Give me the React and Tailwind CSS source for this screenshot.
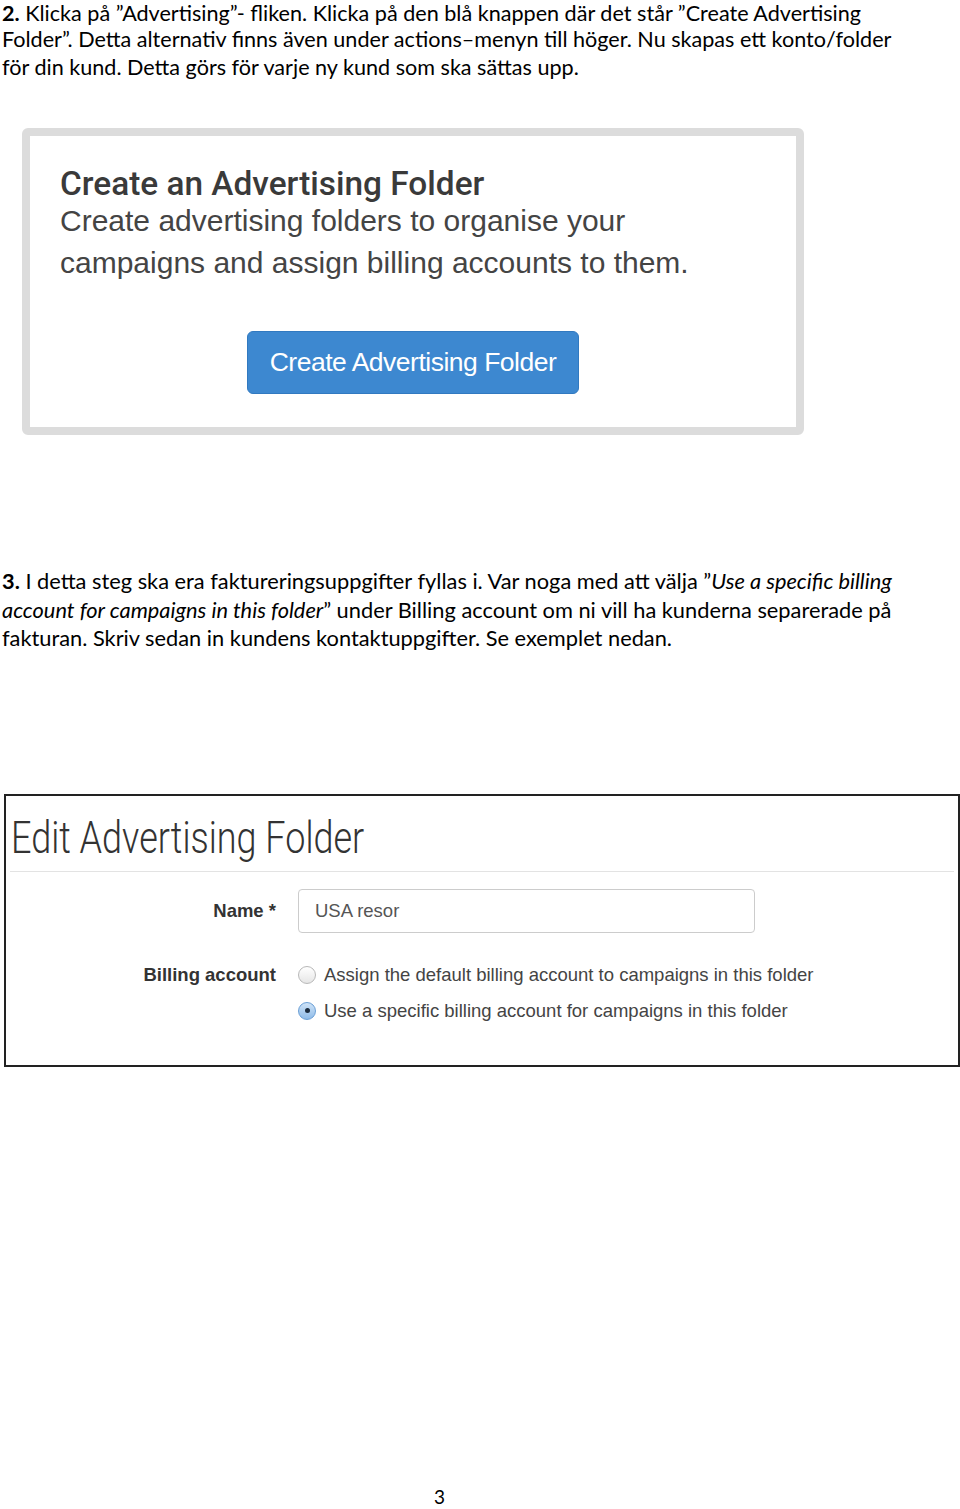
import React from 'react';

const doc = { fontFamily: 'Lato, "Open Sans", sans-serif' };
const helv = { fontFamily: '"Liberation Sans", Arial, sans-serif' };

const Radio = ({ checked }) =>
  checked ? (
    <span className="flex h-[18px] w-[18px] items-center justify-center rounded-full border border-[#6a9fd6] bg-gradient-to-b from-[#cfe3f7] to-[#8fbbe8]">
      <span className="h-[5px] w-[5px] rounded-full bg-[#1b2b3d]" />
    </span>
  ) : (
    <span className="h-[18px] w-[18px] rounded-full border border-[#b8b8b8] bg-gradient-to-b from-white to-[#e6e6e6]" />
  );

export default function App() {
  return (
    <div className="flex h-[1509px] w-[960px] flex-col overflow-hidden bg-white text-black">
      <div className="pt-[2px] text-[21.6px] leading-[28px] whitespace-nowrap pl-[2px]" style={doc}>
        <div className="leading-[22px]"><b>2.</b> Klicka på ”Advertising”- fliken. Klicka på den blå knappen där det står ”Create Advertising</div>
        <div className="mt-[1px]">Folder”. Detta alternativ finns även under actions–menyn till höger. Nu skapas ett konto/folder</div>
        <div>för din kund. Detta görs för varje ny kund som ska sättas upp.</div>
      </div>

      <div className="ml-[22px] mt-[47px] h-[307px] w-[782px] shrink-0 rounded-[6px] border-[8px] border-[#dcdcdc] bg-white">
        <div className="pl-[30px] pt-[28px]">
          <div className="text-[33.4px] font-medium leading-[40px] text-[#3a3a3a]" style={{ fontFamily: 'Roboto, sans-serif' }}>
            Create an Advertising Folder
          </div>
          <div className="mt-[-4px] text-[30px] leading-[42px] text-[#444]" style={helv}>
            Create advertising folders to organise your
            <br />
            campaigns and assign billing accounts to them.
          </div>
        </div>
        <div className="mt-[47px] pl-[217px]">
          <div className="flex h-[63px] w-[332px] items-center justify-center rounded-[6px] border border-[#3179c0] bg-[#3d88d0] text-[26.5px] tracking-[-0.5px] text-white" style={helv}>
            Create Advertising Folder
          </div>
        </div>
      </div>

      <div className="mt-[132px] text-[21.8px] leading-[28.5px] whitespace-nowrap pl-[2px]" style={doc}>
        <div><b>3.</b> I detta steg ska era faktureringsuppgifter fyllas i. Var noga med att välja ”<i>Use a specific billing</i></div>
        <div><i>account for campaigns in this folder</i>” under Billing account om ni vill ha kunderna separerade på</div>
        <div>fakturan. Skriv sedan in kundens kontaktuppgifter. Se exemplet nedan.</div>
      </div>

      <div className="ml-[4px] mt-[141px] h-[273px] w-[956px] shrink-0 border-2 border-[#222] bg-white">
        <div className="h-[75px] overflow-hidden pl-[5px] pt-[17px]">
          <div className="origin-left scale-x-[0.80] text-[45px] font-light leading-[50px] whitespace-nowrap text-[#333]" style={{ fontFamily: 'Roboto, sans-serif' }}>
            Edit Advertising Folder
          </div>
        </div>
        <div className="mx-[4px] h-px bg-[#e3e3e3]" />
        <div className="pt-[17px] text-[18.5px] text-[#333]" style={helv}>
          <div className="flex items-center">
            <div className="w-[270px] text-right font-bold">Name *</div>
            <div className="ml-[22px] flex h-[44px] w-[457px] items-center rounded-[4px] border border-[#ccc] pl-[16px] text-[#555]">
              USA resor
            </div>
          </div>
          <div className="mt-[31px] flex">
            <div className="w-[270px] text-right font-bold leading-[22px]">Billing account</div>
            <div className="ml-[22px] flex flex-col gap-[14px] text-[#444]">
              <div className="flex items-center gap-[8px] leading-[22px]">
                <Radio />
                <span>Assign the default billing account to campaigns in this folder</span>
              </div>
              <div className="flex items-center gap-[8px] leading-[22px]">
                <Radio checked />
                <span>Use a specific billing account for campaigns in this folder</span>
              </div>
            </div>
          </div>
        </div>
      </div>

      <div className="mt-auto pb-[3px] text-center text-[19px] leading-[18px]" style={doc}>
        <span className="ml-[-81px]">3</span>
      </div>
    </div>
  );
}
